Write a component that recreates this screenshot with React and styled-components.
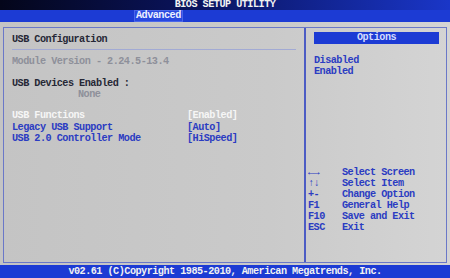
import React from "react";
import styled, { createGlobalStyle } from "styled-components";

const GlobalStyle = createGlobalStyle`
    html, body {
        margin: 0;
        padding: 0;
        background: #000;
    }
    body {
        font-family: "Liberation Mono", "DejaVu Sans Mono", monospace;
    }
`

const Screen = styled.div`
    width: 450px;
    height: 278px;
    display: flex;
    flex-direction: column;
    overflow: hidden;
    font-size: 10.2px;
    letter-spacing: -0.52px;
    font-weight: bold;
    white-space: pre;
`

const TitleBar = styled.div`
    height: 10px;
    line-height: 10px;
    background: linear-gradient(90deg, #04061a 0%, #0a1460 45%, #1a36c8 100%);
    color: #f2f2f2;
    text-align: center;
`

const TabBar = styled.div`
    height: 12px;
    background: #1c3bd4;
    display: flex;
    padding-left: 134px;
`

const Tab = styled.div`
    line-height: 12px;
    padding: 0 2px;
    color: #eef0ff;
    background: #2848e0;
    box-shadow: inset 0 0 0 1px #4a66ea;
`

const Body = styled.div`
    flex: 1;
    background: linear-gradient(90deg, #c4c4c4 0%, #cacaca 60%, #d4d4d4 100%);
    padding: 5px 3px 2px 3px;
    display: flex;
`

const Frame = styled.div`
    flex: 1;
    border: 1px solid #6a78c8;
    display: grid;
    grid-template-columns: 300px 2px 1fr;
`

const Divider = styled.div`
    background: #4c5cc4;
`

const LeftPane = styled.div`
    padding: 6px 8px 0 8px;
    display: flex;
    flex-direction: column;
`

const Line = styled.div`
    line-height: ${p => p.$lh || 11}px;
    height: ${p => p.$lh || 11}px;
    margin-top: ${p => p.$mt || 0}px;
    padding-left: ${p => p.$indent || 0}px;
    color: ${p => p.$color || "#262836"};
`

const Rule = styled.div`
    height: 1px;
    margin-top: 4px;
    background: #a2aad4;
`

const ItemList = styled.div`
    margin-top: 10px;
`

const ItemRow = styled.div`
    display: grid;
    grid-template-columns: 175px 1fr;
    line-height: 11.5px;
    height: 11.5px;
    color: ${p => p.$selected ? "#f6f6f6" : "#2b3cc2"};
`

const RightPane = styled.div`
    padding: 4px 7px 0 8px;
    display: flex;
    flex-direction: column;
`

const OptionsHeader = styled.div`
    height: 12px;
    line-height: 12px;
    background: #1c3bd4;
    color: #d4dbff;
    text-align: center;
`

const HelpList = styled.div`
    margin-top: auto;
    margin-left: -6px;
    padding-bottom: 29px;
    display: grid;
    grid-template-columns: 34px 1fr;
    grid-auto-rows: 11px;
    line-height: 11px;
    color: #2b3cc2;
`

const Footer = styled.div`
    height: 13px;
    line-height: 13px;
    background: #1c3bd4;
    color: #f2f2f2;
    text-align: center;
`

const items = [
    { name: "USB Functions", value: "[Enabled]", selected: true },
    { name: "Legacy USB Support", value: "[Auto]" },
    { name: "USB 2.0 Controller Mode", value: "[HiSpeed]" },
];

const help = [
    ["\u2190\u2192", "Select Screen"],
    ["\u2191\u2193", "Select Item"],
    ["+-", "Change Option"],
    ["F1", "General Help"],
    ["F10", "Save and Exit"],
    ["ESC", "Exit"],
];

const App = () => {
    return (
        <Screen>
            <GlobalStyle />
            <TitleBar>BIOS SETUP UTILITY</TitleBar>
            <TabBar>
                <Tab>Advanced</Tab>
            </TabBar>
            <Body>
                <Frame>
                    <LeftPane>
                        <Line>USB Configuration</Line>
                        <Rule />
                        <Line $mt={6} $color="#8e909a">Module Version - 2.24.5-13.4</Line>
                        <Line $mt={11}>USB Devices Enabled :</Line>
                        <Line $indent={66} $color="#8e909a">None</Line>
                        <ItemList>
                            {items.map((item, index) => (
                                <ItemRow key={index} $selected={item.selected}>
                                    <span>{item.name}</span>
                                    <span>{item.value}</span>
                                </ItemRow>
                            ))}
                        </ItemList>
                    </LeftPane>
                    <Divider />
                    <RightPane>
                        <OptionsHeader>Options</OptionsHeader>
                        <Line $mt={11} $color="#2b3cc2">Disabled</Line>
                        <Line $color="#2b3cc2">Enabled</Line>
                        <HelpList>
                            {help.map(([key, desc], index) => (
                                <React.Fragment key={index}>
                                    <span>{key}</span>
                                    <span>{desc}</span>
                                </React.Fragment>
                            ))}
                        </HelpList>
                    </RightPane>
                </Frame>
            </Body>
            <Footer>v02.61 (C)Copyright 1985-2010, American Megatrends, Inc.</Footer>
        </Screen>
    );
};

export default App;
